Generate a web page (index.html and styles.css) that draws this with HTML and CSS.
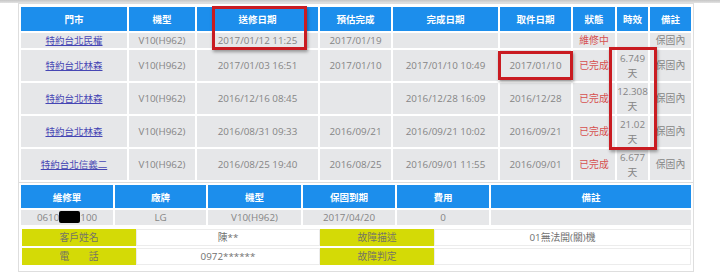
FILE: index.html
```html
<!DOCTYPE html>
<html lang="zh-Hant">
<head>
<meta charset="utf-8">
<link rel="stylesheet" href="styles.css">
</head>
<body>
<div class="topbar"></div>
<div class="panel">
  <table class="grid main">
    <colgroup>
      <col class="w106"><col class="w66"><col class="w121"><col class="w71"><col class="w105"><col class="w71"><col class="w42"><col class="w31"><col class="w41">
    </colgroup>
    <tr class="head">
      <th>門市</th><th>機型</th><th>送修日期</th><th>預估完成</th><th>完成日期</th><th>取件日期</th><th>狀態</th><th>時效</th><th>備註</th>
    </tr>
    <tr class="short">
      <td><a class="store" href="#">特約台北民權</a></td><td>V10(H962)</td><td>2017/01/12 11:25</td><td>2017/01/19</td><td></td><td></td><td class="status">維修中</td><td></td><td>保固內</td>
    </tr>
    <tr class="tall">
      <td><a class="store" href="#">特約台北林森</a></td><td>V10(H962)</td><td>2017/01/03 16:51</td><td>2017/01/10</td><td>2017/01/10 10:49</td><td>2017/01/10</td><td class="status">已完成</td><td class="days">6.749 天</td><td>保固內</td>
    </tr>
    <tr class="tall">
      <td><a class="store" href="#">特約台北林森</a></td><td>V10(H962)</td><td>2016/12/16 08:45</td><td></td><td>2016/12/28 16:09</td><td>2016/12/28</td><td class="status">已完成</td><td class="days">12.308 天</td><td>保固內</td>
    </tr>
    <tr class="tall">
      <td><a class="store" href="#">特約台北林森</a></td><td>V10(H962)</td><td>2016/08/31 09:33</td><td>2016/09/21</td><td>2016/09/21 10:02</td><td>2016/09/21</td><td class="status">已完成</td><td class="days">21.02 天</td><td>保固內</td>
    </tr>
    <tr class="tall">
      <td><a class="store" href="#">特約台北信義二</a></td><td>V10(H962)</td><td>2016/08/25 19:40</td><td>2016/08/25</td><td>2016/09/01 11:55</td><td>2016/09/01</td><td class="status">已完成</td><td class="days">6.677 天</td><td>保固內</td>
    </tr>
  </table>
  <div class="sep"></div>
  <table class="grid sub">
    <colgroup>
      <col class="w92"><col class="w91"><col class="w93"><col class="w92"><col class="w92b"><col class="w200">
    </colgroup>
    <tr class="head2">
      <th>維修單</th><th>廠牌</th><th>機型</th><th>保固到期</th><th>費用</th><th>備註</th>
    </tr>
    <tr class="short">
      <td>0610<span class="redact"></span>100</td><td>LG</td><td>V10(H962)</td><td>2017/04/20</td><td>0</td><td></td>
    </tr>
  </table>
  <table class="info">
    <colgroup>
      <col class="w114"><col class="w184"><col class="w114"><col class="w257">
    </colgroup>
    <tr>
      <td class="label">客戶姓名</td><td class="value">陳**</td><td class="label">故障描述</td><td class="value">01無法開(關)機</td>
    </tr>
    <tr>
      <td class="label">電　　話</td><td class="value">0972******</td><td class="label">故障判定</td><td class="value"></td>
    </tr>
  </table>
</div>
<div class="bottombar"></div>
<div class="mark m1"></div>
<div class="mark m2"></div>
<div class="mark m3"></div>
</body>
</html>
```
FILE: styles.css
```css
html, body {
  margin: 0;
  padding: 0;
  background: #ffffff;
}
body {
  position: relative;
  width: 720px;
  height: 275px;
  overflow: hidden;
  font-family: "Open Sans", "Noto Sans CJK TC", sans-serif;
  font-size: 9.8px;
  color: #858585;
}
.topbar {
  height: 3px;
  background: linear-gradient(#c6c6c6, #e2e2e2);
}
.panel {
  margin-left: 18px;
  width: 674px;
  border: 1px solid #dedede;
  padding: 1px 0 4px 0;
  background: #fff;
}
.grid {
  table-layout: fixed;
  width: 674px;
  border-collapse: separate;
  border-spacing: 2px;
}
.grid th, .grid td {
  padding: 0;
  text-align: center;
  vertical-align: middle;
  overflow: visible;
  white-space: normal;
}
.grid th {
  background: #1c8eec;
  color: #ffffff;
  font-weight: bold;
  font-size: 9.5px;
}
.grid td {
  background: #e6e7e9;
  line-height: 15px;
}
.head th { height: 24px; }
.head2 th { height: 23px; }
.short td { height: 15px; }
.tall td { height: 31px; }
.w106 { width: 106px; }
.w66 { width: 66px; }
.w121 { width: 121px; }
.w71 { width: 71px; }
.w105 { width: 105px; }
.w42 { width: 42px; }
.w31 { width: 31px; }
.w41 { width: 41px; }
.w92, .w92b { width: 92px; }
.w91 { width: 91px; }
.w93 { width: 93px; }
.w200 { width: 200px; }
.w114 { width: 114px; }
.w184 { width: 184px; }
.w257 { width: 257px; }
.store {
  color: #4646b4;
  text-decoration: underline;
  font-size: 9.5px;
}
.status {
  color: #d65050;
}
.days {
  line-height: 15px;
}
.sep {
  height: 1px;
  background: #dcdcdc;
}
.redact {
  display: inline-block;
  width: 21px;
  height: 12px;
  background: #000;
  border-radius: 2px;
  vertical-align: -2px;
}
.info {
  table-layout: fixed;
  width: 669px;
  margin-left: 3px;
  border-collapse: separate;
  border-spacing: 0 2px;
}
.info td {
  height: 15px;
  padding: 0;
  text-align: center;
  line-height: 13px;
  font-size: 9.8px;
}
.info .label {
  background: #d4da06;
  color: #757565;
}
.info .value {
  background: #fff;
  color: #707070;
  border: 1px solid #ececec;
}
.bottombar {
  margin-top: 3px;
  height: 4px;
  background: #dcdcdc;
}
.mark {
  position: absolute;
  box-sizing: border-box;
  border: 3px solid #c91b21;
  box-shadow: 1px 2px 3px rgba(0, 0, 0, 0.35);
}
.m1 { left: 212px; top: 6px; width: 95px; height: 44px; }
.m2 { left: 498px; top: 51px; width: 75px; height: 29px; }
.m3 { left: 609px; top: 47px; width: 48px; height: 103px; }
```
